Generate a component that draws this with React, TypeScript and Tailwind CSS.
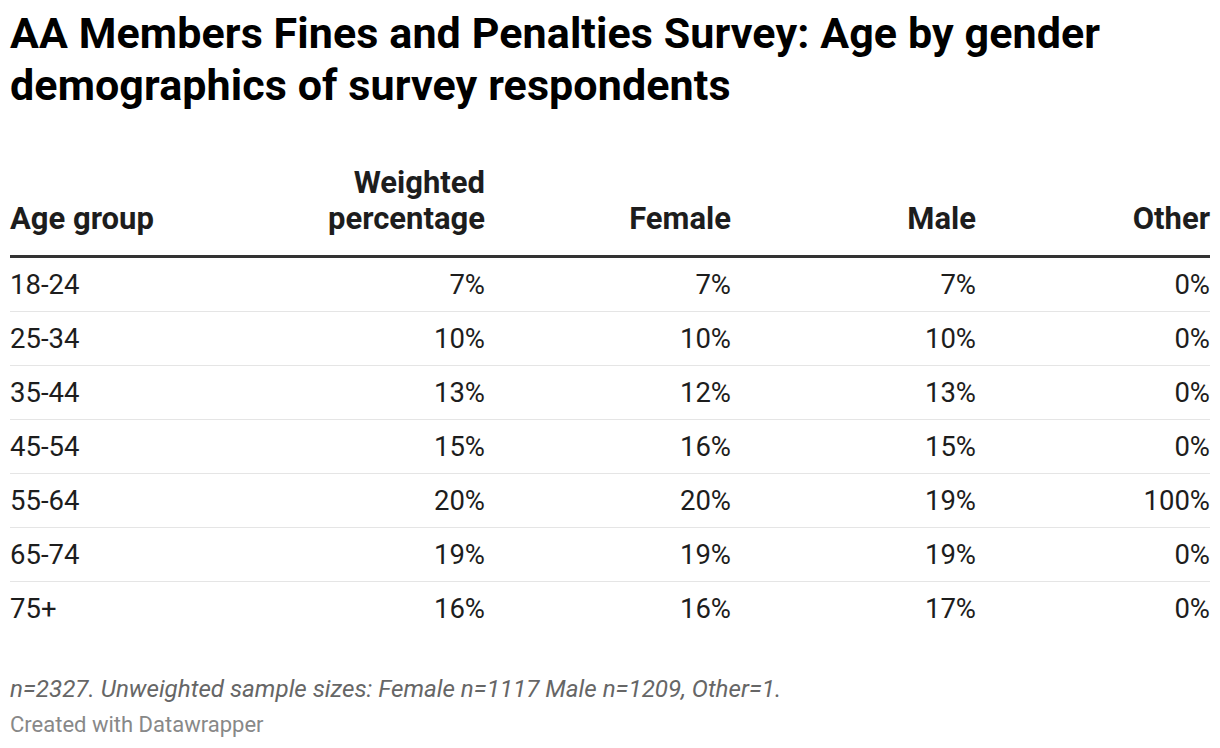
const rows = [
  ['18-24', '7%', '7%', '7%', '0%'],
  ['25-34', '10%', '10%', '10%', '0%'],
  ['35-44', '13%', '12%', '13%', '0%'],
  ['45-54', '15%', '16%', '15%', '0%'],
  ['55-64', '20%', '20%', '19%', '100%'],
  ['65-74', '19%', '19%', '19%', '0%'],
  ['75+', '16%', '16%', '17%', '0%'],
];

const cols = 'grid grid-cols-[240px_235px_246px_245px_234px]';

export default function App() {
  return (
    <div
      className="w-[1220px] h-[748px] bg-white px-[10px] pt-[7px] overflow-hidden"
      style={{ fontFamily: 'Roboto, "Liberation Sans", sans-serif' }}
    >
      <h1 className="text-[43px] leading-[52px] font-bold text-black tracking-[0.1px]">
        AA Members Fines and Penalties Survey: Age by gender demographics of survey respondents
      </h1>

      <div className="mt-[54px]">
        <div className={`${cols} items-end pb-[18px] border-b-[3px] border-[#333] text-[31px] leading-[36px] font-bold text-[#1d1d1d]`}>
          <div>Age group</div>
          <div className="text-right">
            Weighted
            <br />
            percentage
          </div>
          <div className="text-right">Female</div>
          <div className="text-right">Male</div>
          <div className="text-right">Other</div>
        </div>

        {rows.map((r, i) => (
          <div
            key={r[0]}
            className={`${cols} h-[54px] items-center text-[27.5px] text-[#1d1d1d] ${
              i < rows.length - 1 ? 'border-b border-[#e5e5e5]' : ''
            }`}
          >
            <div>{r[0]}</div>
            <div className="text-right">{r[1]}</div>
            <div className="text-right">{r[2]}</div>
            <div className="text-right">{r[3]}</div>
            <div className="text-right">{r[4]}</div>
          </div>
        ))}
      </div>

      <div className="mt-[35px] text-[24.2px] leading-[36px] italic text-[#666]">
        n=2327. Unweighted sample sizes: Female n=1117 Male n=1209, Other=1.
      </div>
      <div className="text-[22px] leading-[36px] text-[#888]">Created with Datawrapper</div>
    </div>
  );
}
